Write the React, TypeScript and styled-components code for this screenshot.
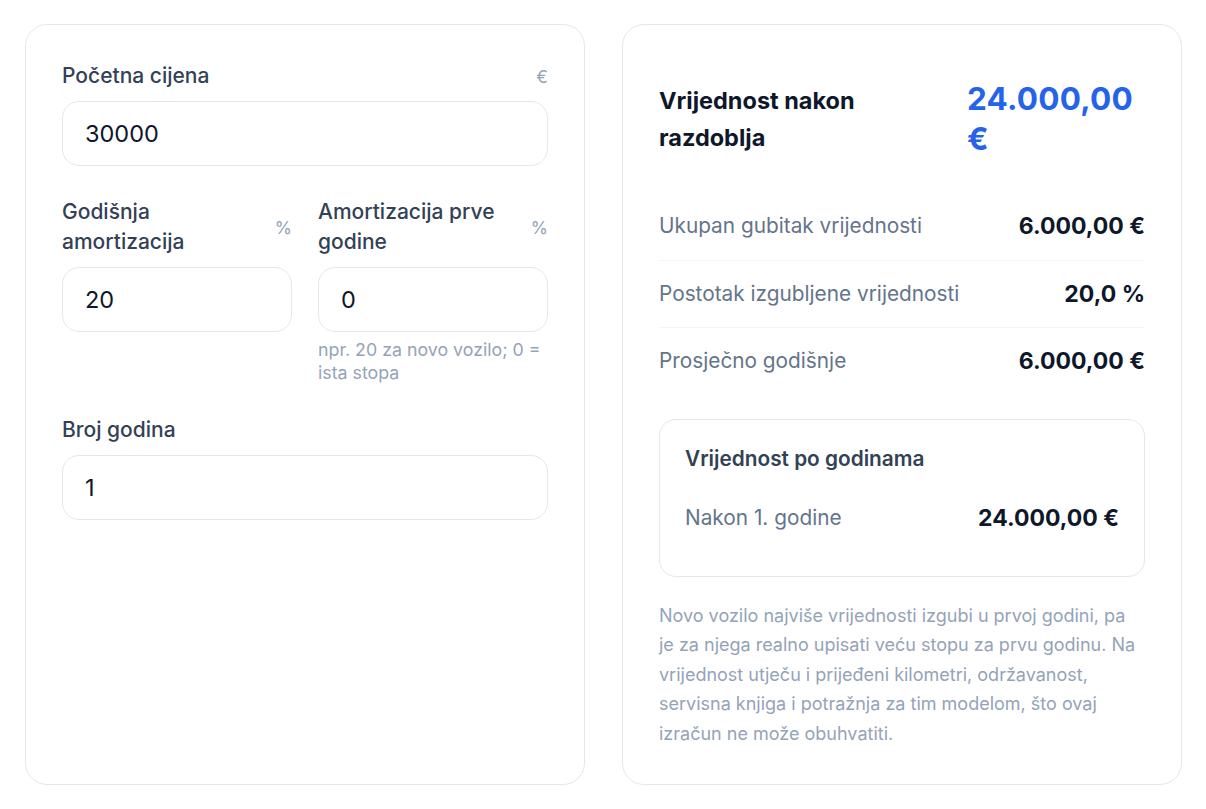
import styled, { createGlobalStyle } from 'styled-components';
import { FC } from 'react';

const GlobalStyle = createGlobalStyle`
  * { box-sizing: border-box; }
  body {
    margin: 0;
    background: #ffffff;
    font-family: Inter, 'Noto Sans', 'Liberation Sans', sans-serif;
    color: #0f172a;
  }
`;

const Page = styled.div`
  display: grid;
  grid-template-columns: 560px 560px;
  gap: 37px;
  padding: 24px 25px;
  align-items: stretch;
`;

const Card = styled.section`
  border: 1px solid #e5e7eb;
  border-radius: 22px;
  background: #ffffff;
  padding: 36px 36px 36px;
`;

const Fields = styled.div`
  display: flex;
  flex-direction: column;
  gap: 31px;
`;

const FieldRow = styled.div`
  display: grid;
  grid-template-columns: 1fr 1fr;
  gap: 26px;
`;

const Field = styled.label`
  display: flex;
  flex-direction: column;
`;

const LabelRow = styled.div`
  display: flex;
  justify-content: space-between;
  align-items: center;
  gap: 12px;
  margin-bottom: 10px;
`;

const LabelText = styled.span`
  font-size: 21px;
  line-height: 30px;
  font-weight: 500;
  color: #334155;
`;

const Unit = styled.span`
  font-size: 17.5px;
  color: #94a3b8;
  flex-shrink: 0;
`;

const Input = styled.input`
  width: 100%;
  height: 65px;
  border: 1px solid #e2e8f0;
  border-radius: 17px;
  padding: 0 22px;
  font-family: inherit;
  font-size: 23.5px;
  color: #0f172a;
  background: #ffffff;
  outline: none;
`;

const Hint = styled.span`
  margin-top: 6px;
  font-size: 17.8px;
  line-height: 23px;
  color: #94a3b8;
`;

const Header = styled.div`
  display: flex;
  align-items: center;
  justify-content: space-between;
  padding: 18px 0 34px;
`;

const HeaderTitle = styled.h2`
  margin: 0;
  width: 260px;
  font-size: 23.5px;
  line-height: 37px;
  font-weight: 700;
  color: #0f172a;
`;

const HeaderValue = styled.div`
  width: 178px;
  font-size: 31.5px;
  line-height: 40px;
  font-weight: 700;
  color: #2563eb;
  letter-spacing: 0.2px;
`;

const StatRow = styled.div<{ $last?: boolean }>`
  display: flex;
  justify-content: space-between;
  align-items: center;
  padding: 18.3px 0;
  line-height: 30px;
  border-bottom: ${({ $last }) => ($last ? 'none' : '1px solid #f1f5f9')};
`;

const StatLabel = styled.span`
  font-size: 20.8px;
  color: #64748b;
`;

const StatValue = styled.span`
  font-size: 23px;
  font-weight: 700;
  color: #0f172a;
`;

const Breakdown = styled.div`
  margin-top: 24px;
  border: 1px solid #e2e8f0;
  border-radius: 17px;
  padding: 24px 25px 31px;
`;

const BreakdownTitle = styled.h3`
  margin: 0 0 17px;
  font-size: 20.8px;
  line-height: 30px;
  font-weight: 600;
  color: #334155;
`;

const BreakdownRow = styled.div`
  display: flex;
  justify-content: space-between;
  align-items: center;
  padding: 12px 0;
  line-height: 30px;
`;

const Note = styled.p`
  margin: 24px 0 0;
  font-size: 18px;
  line-height: 29.5px;
  color: #94a3b8;
`;

const InputField: FC<{
  label: string;
  unit?: string;
  value: string;
  hint?: string;
}> = ({ label, unit, value, hint }) => (
  <Field>
    <LabelRow>
      <LabelText>{label}</LabelText>
      {unit && <Unit>{unit}</Unit>}
    </LabelRow>
    <Input type='text' defaultValue={value} />
    {hint && <Hint>{hint}</Hint>}
  </Field>
);

const stats = [
  { label: 'Ukupan gubitak vrijednosti', value: '6.000,00 €' },
  { label: 'Postotak izgubljene vrijednosti', value: '20,0 %' },
  { label: 'Prosječno godišnje', value: '6.000,00 €' },
];

export default function App() {
  return (
    <>
      <GlobalStyle />
      <Page>
        <Card>
          <Fields>
            <InputField label='Početna cijena' unit='€' value='30000' />
            <FieldRow>
              <InputField label='Godišnja amortizacija' unit='%' value='20' />
              <InputField
                label='Amortizacija prve godine'
                unit='%'
                value='0'
                hint='npr. 20 za novo vozilo; 0 = ista stopa'
              />
            </FieldRow>
            <InputField label='Broj godina' value='1' />
          </Fields>
        </Card>

        <Card>
          <Header>
            <HeaderTitle>Vrijednost nakon razdoblja</HeaderTitle>
            <HeaderValue>24.000,00 €</HeaderValue>
          </Header>
          {stats.map((s, i) => (
            <StatRow key={s.label} $last={i === stats.length - 1}>
              <StatLabel>{s.label}</StatLabel>
              <StatValue>{s.value}</StatValue>
            </StatRow>
          ))}
          <Breakdown>
            <BreakdownTitle>Vrijednost po godinama</BreakdownTitle>
            <BreakdownRow>
              <StatLabel>Nakon 1. godine</StatLabel>
              <StatValue>24.000,00 €</StatValue>
            </BreakdownRow>
          </Breakdown>
          <Note>
            Novo vozilo najviše vrijednosti izgubi u prvoj godini, pa je za
            njega realno upisati veću stopu za prvu godinu. Na vrijednost
            utječu i prijeđeni kilometri, održavanost, servisna knjiga i
            potražnja za tim modelom, što ovaj izračun ne može obuhvatiti.
          </Note>
        </Card>
      </Page>
    </>
  );
}
